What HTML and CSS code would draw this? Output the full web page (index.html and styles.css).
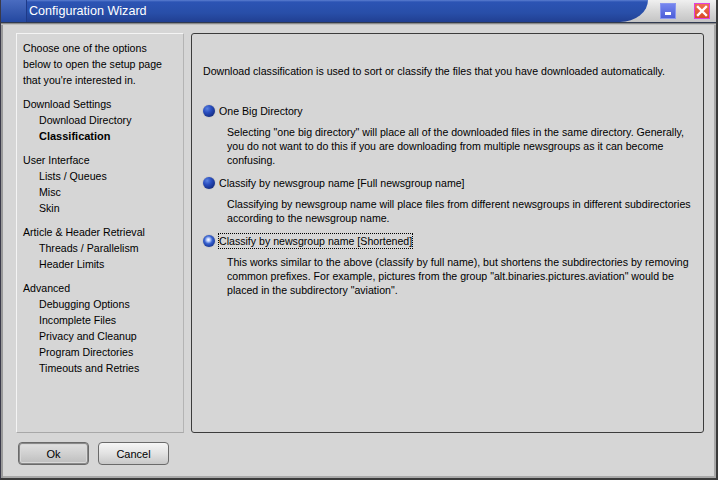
FILE: index.html
```html
<!DOCTYPE html>
<html>
<head>
<meta charset="utf-8">
<link rel="stylesheet" href="styles.css">
<title>Configuration Wizard</title>
</head>
<body>
<div class="window">
  <div class="titlebar">
    <div class="title-blue">
      <div class="title-icon"></div>
      <div class="title-text">Configuration Wizard</div>
    </div>
    <div class="title-buttons">
      <div class="tb-btn tb-min"><span class="min-dash"></span></div>
      <div class="tb-btn tb-close">
        <svg width="12" height="12" viewBox="0 0 12 12"><path d="M2 2 L10 10 M10 2 L2 10" stroke="#fff" stroke-width="2.4" stroke-linecap="square"/></svg>
      </div>
    </div>
  </div>
  <div class="title-sep"></div>
  <div class="content">
    <div class="panels">
      <div class="nav">
        <p class="nav-intro">Choose one of the options<br>below to open the setup page<br>that you're interested in.</p>
        <div class="nav-group">
          <div class="nav-head">Download Settings</div>
          <div class="nav-item">Download Directory</div>
          <div class="nav-item active">Classification</div>
        </div>
        <div class="nav-group">
          <div class="nav-head">User Interface</div>
          <div class="nav-item">Lists / Queues</div>
          <div class="nav-item">Misc</div>
          <div class="nav-item">Skin</div>
        </div>
        <div class="nav-group">
          <div class="nav-head">Article &amp; Header Retrieval</div>
          <div class="nav-item">Threads / Parallelism</div>
          <div class="nav-item">Header Limits</div>
        </div>
        <div class="nav-group">
          <div class="nav-head">Advanced</div>
          <div class="nav-item">Debugging Options</div>
          <div class="nav-item">Incomplete Files</div>
          <div class="nav-item">Privacy and Cleanup</div>
          <div class="nav-item">Program Directories</div>
          <div class="nav-item">Timeouts and Retries</div>
        </div>
      </div>
      <div class="page">
        <p class="intro">Download classification is used to sort or classify the files that you have downloaded automatically.</p>
        <div class="option">
          <div class="opt-row"><span class="radio"></span><span class="opt-label">One Big Directory</span></div>
          <p class="desc">Selecting "one big directory" will place all of the downloaded files in the same directory. Generally,<br>you do not want to do this if you are downloading from multiple newsgroups as it can become<br>confusing.</p>
        </div>
        <div class="option">
          <div class="opt-row"><span class="radio"></span><span class="opt-label">Classify by newsgroup name [Full newsgroup name]</span></div>
          <p class="desc">Classifying by newsgroup name will place files from different newsgroups in different subdirectories<br>according to the newsgroup name.</p>
        </div>
        <div class="option">
          <div class="opt-row"><span class="radio checked"></span><span class="opt-label focus">Classify by newsgroup name [Shortened]</span></div>
          <p class="desc">This works similar to the above (classify by full name), but shortens the subdirectories by removing<br>common prefixes. For example, pictures from the group "alt.binaries.pictures.aviation" would be<br>placed in the subdirectory "aviation".</p>
        </div>
      </div>
    </div>
    <div class="buttons">
      <div class="btn default">Ok</div>
      <div class="btn">Cancel</div>
    </div>
  </div>
</div>
</body>
</html>
```

FILE: styles.css
```css
html, body {
  margin: 0;
  padding: 0;
  width: 718px;
  height: 480px;
  overflow: hidden;
  background: #d4d4d4;
  font-family: "Liberation Sans", Arial, sans-serif;
  font-size: 10.6px;
  color: #000;
}

.window {
  width: 718px;
  height: 480px;
  box-sizing: border-box;
  background: #d6d6d6;
  border-left: 1px solid #3a3a4a;
  border-right: 2px solid #3a3a3a;
  border-bottom: 2px solid #3a3a3a;
  box-shadow: inset 2px 0 0 #9a9a9a, inset -2px -2px 0 #a8a8a8;
  display: flex;
  flex-direction: column;
}

.titlebar {
  height: 22px;
  display: flex;
  background: linear-gradient(#f0f0f0, #d8d8d8 50%, #c4c4c4);
}

.title-blue {
  flex: 1;
  display: flex;
  align-items: center;
  background: linear-gradient(#5b7ed0 0, #2c54b4 2px, #284ea8 60%, #213f92 100%);
  border-bottom-right-radius: 28px 22px;
}

.title-icon {
  width: 26px;
  height: 22px;
  box-sizing: border-box;
  border-right: 1px solid #1e3a88;
  background: linear-gradient(#4a6cc0, #2448a0);
}

.title-text {
  color: #fff;
  font-size: 12.6px;
  padding-left: 2px;
  padding-bottom: 1px;
}

.title-buttons {
  width: 68px;
  display: flex;
  align-items: center;
  gap: 18px;
  padding-left: 12px;
  box-sizing: border-box;
}

.tb-btn {
  width: 16px;
  height: 16px;
  box-sizing: border-box;
  display: flex;
  align-items: center;
  justify-content: center;
}

.tb-min {
  background: linear-gradient(#7686ee, #4c5ed8);
  border: 1px solid #8a96f0;
  align-items: flex-end;
  padding-bottom: 3px;
}

.min-dash {
  width: 6px;
  height: 3px;
  background: #fff;
}

.tb-close {
  background: linear-gradient(#f07050, #d84a2a);
  border: 1px solid #e040e0;
}

.title-sep {
  height: 3px;
  background: linear-gradient(#303a50 0, #303a50 1px, #8a8a8a 1px, #8a8a8a 2px, #c0c0c0 2px);
}

.content {
  flex: 1;
  display: flex;
  flex-direction: column;
  padding: 8px 12px 0 15px;
}

.panels {
  display: flex;
  gap: 7px;
  height: 400px;
}

.nav {
  width: 168px;
  box-sizing: border-box;
  border: 1px solid #f4f4f4;
  border-right-color: #b4b4b4;
  border-bottom-color: #a8a8a8;
  padding: 6px 0 0 6px;
  line-height: 16px;
}

.nav-intro {
  margin: 0;
}

.nav-group {
  margin-top: 8px;
}

.nav-item {
  padding-left: 16px;
}

.nav-item.active {
  font-weight: bold;
  font-size: 11px;
}

.page {
  position: relative;
  flex: 1;
  box-sizing: border-box;
  border: 1px solid #3c3c3c;
  border-radius: 3px;
  padding: 30px 0 0 11px;
  line-height: 14px;
  white-space: nowrap;
}

.intro {
  margin: 0 0 26px;
}

.option {
  margin-bottom: 9px;
}

.opt-row {
  display: flex;
  align-items: center;
  height: 14px;
}

.radio {
  width: 12px;
  height: 12px;
  border-radius: 50%;
  margin-right: 4px;
  background: radial-gradient(circle at 35% 30%, #5a82e0 0, #2a4ec0 35%, #152f86 75%, #0c1c50 100%);
  box-shadow: 0 0 1px #777;
}

.radio.checked {
  background: radial-gradient(circle at 45% 40%, #ffffff 0, #c8d8ff 15%, #3a64d0 40%, #1e40a8 65%, #0c2060 100%);
}

.opt-label.focus {
  outline: 1px dotted #000;
  outline-offset: 0;
}

.desc {
  margin: 7px 0 0 24px;
}

.buttons {
  display: flex;
  gap: 9px;
  padding: 9px 0 0 2px;
}

.btn {
  width: 71px;
  height: 23px;
  box-sizing: border-box;
  border: 1px solid #6a6a6a;
  border-radius: 4px;
  background: linear-gradient(#f6f6f6, #e2e2e2 50%, #c8c8c8);
  display: flex;
  align-items: center;
  justify-content: center;
  font-size: 11px;
}

.btn.default {
  box-shadow: inset 0 0 0 1px #8a8a8a, inset 0 0 0 2px #d8d8d8;
  background: linear-gradient(#e2e2e2, #d0d0d0 50%, #bcbcbc);
}
```
